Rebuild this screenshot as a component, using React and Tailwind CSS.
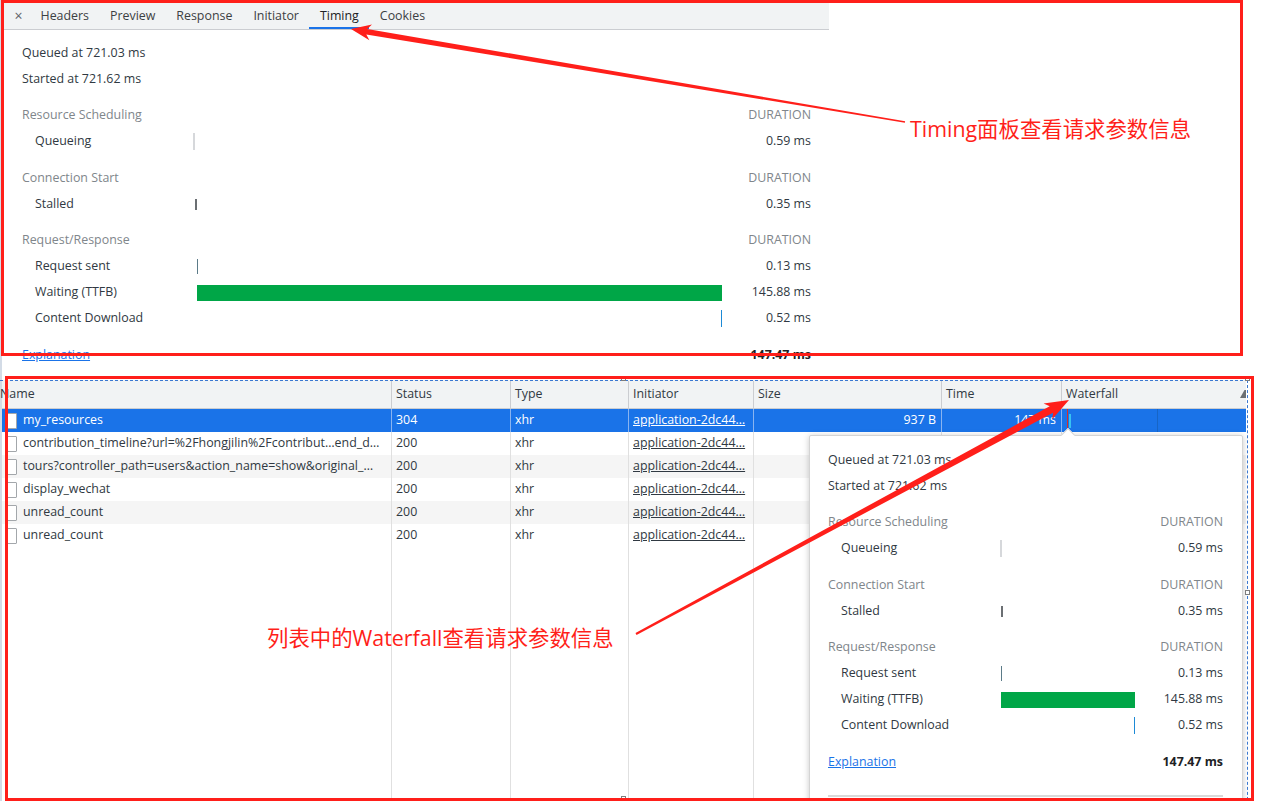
import React from 'react';

const TABS = ['Headers', 'Preview', 'Response', 'Initiator', 'Timing', 'Cookies'];

const SECTIONS = [
  { title: 'Resource Scheduling', rows: [{ label: 'Queueing', value: '0.59 ms', bar: 'queue' }] },
  { title: 'Connection Start', rows: [{ label: 'Stalled', value: '0.35 ms', bar: 'stalled' }] },
  {
    title: 'Request/Response',
    rows: [
      { label: 'Request sent', value: '0.13 ms', bar: 'sent' },
      { label: 'Waiting (TTFB)', value: '145.88 ms', bar: 'wait' },
      { label: 'Content Download', value: '0.52 ms', bar: 'download' },
    ],
  },
];

const COLS = [
  { title: 'Name', w: 'w-[390px]' },
  { title: 'Status', w: 'w-[119px]' },
  { title: 'Type', w: 'w-[118px]' },
  { title: 'Initiator', w: 'w-[125px]' },
  { title: 'Size', w: 'w-[188px]' },
  { title: 'Time', w: 'w-[120px]' },
  { title: 'Waterfall', w: 'w-[184px]' },
];

const REQUESTS = [
  { name: 'my_resources', status: '304', size: '937 B', time: '147 ms', selected: true },
  { name: 'contribution_timeline?url=%2Fhongjilin%2Fcontribut…end_d…', status: '200' },
  { name: 'tours?controller_path=users&action_name=show&original_…', status: '200' },
  { name: 'display_wechat', status: '200' },
  { name: 'unread_count', status: '200' },
  { name: 'unread_count', status: '200' },
];

// tapered annotation arrow, thin at the tail and thick near the head
const arrowPoints = (tail, tip, w0, w1, L, H) => {
  const dx = tip[0] - tail[0];
  const dy = tip[1] - tail[1];
  const len = Math.hypot(dx, dy);
  const ux = dx / len, uy = dy / len;
  const nx = -uy, ny = ux;
  const bx = tip[0] - ux * L, by = tip[1] - uy * L;
  const wx = bx - ux * 4, wy = by - uy * 4;
  const p = (x, y) => `${x.toFixed(1)},${y.toFixed(1)}`;
  return [
    p(tail[0] + nx * w0, tail[1] + ny * w0),
    p(bx + nx * w1, by + ny * w1),
    p(wx + nx * H, wy + ny * H),
    p(tip[0], tip[1]),
    p(wx - nx * H, wy - ny * H),
    p(bx - nx * w1, by - ny * w1),
    p(tail[0] - nx * w0, tail[1] - ny * w0),
  ].join(' ');
};

const Bar = ({ kind }) => {
  if (kind === 'queue') return <div className="h-[17px] w-[2px] bg-[#d6d8db]" />;
  if (kind === 'stalled') return <div className="ml-[0.4%] h-[11px] w-[2px] bg-[#6b6f73]" />;
  if (kind === 'sent') return <div className="ml-[0.8%] h-[15px] w-px bg-[#5b7b88]" />;
  if (kind === 'wait') return <div className="ml-[0.8%] h-[16px] flex-1 bg-[#00a647]" />;
  return <div className="ml-auto h-[17px] w-px bg-[#1d8ad6]" />;
};

const TimingTable = ({ labelW, barW }) => (
  <div className="text-[12.4px] text-[#303942]">
    <div className="flex h-[26px] items-center">Queued at 721.03 ms</div>
    <div className="flex h-[26px] items-center">Started at 721.62 ms</div>
    {SECTIONS.map((s) => (
      <div key={s.title} className="mt-[10.5px]">
        <div className="flex h-[26px] items-center text-[#80868b]">
          <span className="flex-1">{s.title}</span>
          <span>DURATION</span>
        </div>
        {s.rows.map((r) => (
          <div key={r.label} className="flex h-[26px] items-center">
            <div className={`${labelW} shrink-0 pl-[13px]`}>{r.label}</div>
            <div className={`${barW} flex h-full shrink-0 items-center`}>
              <Bar kind={r.bar} />
            </div>
            <div className="flex-1 text-right">{r.value}</div>
          </div>
        ))}
      </div>
    ))}
    <div className="mt-[10.5px] flex h-[26px] items-center">
      <a className="text-[#1a73e8] underline">Explanation</a>
      <span className="ml-auto font-bold text-[#202124]">147.47 ms</span>
    </div>
  </div>
);

const RequestRow = ({ req, striped }) => {
  const sel = req.selected;
  const tone = sel ? 'bg-[#1a73e8] text-white' : striped ? 'bg-[#f5f5f5] text-[#303942]' : 'bg-white text-[#303942]';
  const line = sel ? 'border-[#8ab4f0]' : 'border-[#e0e0e0]';
  return (
    <div className={`flex h-[23px] shrink-0 items-center text-[12.4px] ${tone}`}>
      <div className={`flex h-full w-[390px] shrink-0 items-center overflow-hidden border-r pl-[5px] ${line}`}>
        <span className="mr-[6px] h-[16px] w-[10px] shrink-0 rounded-[1px] border border-[#a3a7ab] bg-white" />
        <span className="whitespace-nowrap">{req.name}</span>
      </div>
      <div className={`flex h-full w-[119px] shrink-0 items-center border-r pl-[4px] ${line}`}>{req.status}</div>
      <div className={`flex h-full w-[118px] shrink-0 items-center border-r pl-[4px] ${line}`}>xhr</div>
      <div className={`flex h-full w-[125px] shrink-0 items-center overflow-hidden border-r pl-[4px] ${line}`}>
        <span className="whitespace-nowrap underline">application-2dc44…</span>
      </div>
      <div className={`flex h-full w-[188px] shrink-0 items-center justify-end border-r pr-[5px] ${line}`}>{req.size}</div>
      <div className={`flex h-full w-[120px] shrink-0 items-center justify-end border-r pr-[5px] ${line}`}>{req.time}</div>
      <div className="flex h-full w-[184px] shrink-0 items-center pl-[5px]">
        {sel && (
          <>
            <span className="h-full w-px bg-[#d93025]" />
            <span className="ml-px h-[14px] w-[2px] bg-[#36c3f2]" />
            <span className="ml-[86px] h-full w-px bg-[#1765c6]" />
          </>
        )}
      </div>
    </div>
  );
};

const NetworkTable = () => (
  <div className="flex w-[1244px] flex-1 flex-col">
    <div className="flex h-[29px] shrink-0 border-b border-[#cbcdd1] bg-[#f1f3f4] pt-px text-[12.4px] text-[#303942]">
      {COLS.map((c, i) => (
        <div
          key={c.title}
          className={`${c.w} flex shrink-0 items-center ${i < COLS.length - 1 ? 'border-r border-[#cbcdd1]' : 'justify-between'} ${i === 0 ? 'pl-0' : 'pl-[4px]'}`}
        >
          <span className={i === 0 ? '-ml-[2px]' : ''}>{c.title}</span>
          {i === COLS.length - 1 && (
            <svg width="6" height="8" viewBox="0 0 6 8" className="mb-[2px]">
              <polygon points="4.5,0 6,0 6,8 0,8" fill="#6b6f73" />
            </svg>
          )}
        </div>
      ))}
    </div>
    {REQUESTS.map((r, i) => (
      <RequestRow key={i} req={r} striped={i % 2 === 0 && i > 0} />
    ))}
    <div className="flex flex-1">
      {COLS.map((c, i) => (
        <div key={c.title} className={`${c.w} shrink-0 ${i < COLS.length - 1 ? 'border-r border-[#e0e0e0]' : ''}`} />
      ))}
    </div>
  </div>
);

const Handle = ({ className }) => (
  <div className={`absolute h-[5px] w-[5px] border border-[#7d7d7d] bg-white ${className}`} />
);

export default function App() {
  return (
    <div className="relative flex h-[801px] w-[1267px] overflow-hidden bg-white font-['Open_Sans','Noto_Sans_CJK_SC',sans-serif]">
      <div className="h-full w-[2px] shrink-0 bg-[#d3dbe6]" />
      <div className="flex min-w-0 flex-1 flex-col">
        <section className="h-[380px] shrink-0">
          <div className="flex h-[30px] w-[827px] items-stretch border-b border-[#cbcdd1] bg-[#f1f3f4] text-[12.4px] text-[#3c4043]">
            <div className="flex w-[28px] items-center justify-center pl-[5px] pt-[2px] text-[14px] text-[#5f6368]">×</div>
            {TABS.map((t) => (
              <div
                key={t}
                className={`flex items-center px-[10.5px] ${t === 'Timing' ? 'border-b-2 border-[#1a73e8] pt-[5px] text-[#202124]' : 'pt-[3px]'}`}
              >
                {t}
              </div>
            ))}
          </div>
          <div className="w-[827px] pl-[20px] pr-[18px] pt-[10px]">
            <TimingTable labelW="w-[171px]" barW="w-[529px]" />
          </div>
        </section>
        <NetworkTable />
      </div>

      {/* waterfall hover popup */}
      <div className="absolute left-[809px] top-[435px] h-[400px] w-[434px] rounded-[2px] border border-[#d4d4d4] bg-white pl-[18px] pr-[19px] pt-[11px] shadow-[0_1px_6px_rgba(0,0,0,0.22)]">
        <div className="absolute -top-[6px] left-[253px] h-[10px] w-[10px] rotate-45 border-l border-t border-[#d4d4d4] bg-white" />
        <TimingTable labelW="w-[172px]" barW="w-[135px]" />
        <div className="mt-[20px] border-t-2 border-[#d9d9d9]" />
      </div>

      {/* selection outline */}
      <div className="pointer-events-none absolute left-0 top-[380px] h-[430px] w-[1248px] border-r border-t border-dashed border-[#3a78d0]" />
      <Handle className="left-[621px] top-[376px]" />
      <Handle className="left-[1245px] top-[376px]" />
      <Handle className="left-[1245px] top-[590px]" />
      <Handle className="left-[621px] top-[796px]" />

      {/* annotations */}
      <div className="pointer-events-none absolute left-[1px] top-0 h-[356px] w-[1242px] border-[3px] border-[#ff1f1a]" />
      <div className="pointer-events-none absolute left-[5px] top-[376px] h-[425px] w-[1249px] border-[3px] border-[#ff1f1a]" />
      <svg className="pointer-events-none absolute left-0 top-0" width="1267" height="801">
        <polygon points={arrowPoints([905, 122], [351, 29], 0.8, 2.8, 16, 8)} fill="#ff1f1a" />
        <polygon points={arrowPoints([636, 634], [1069, 400], 1, 3.6, 20, 9)} fill="#ff1f1a" />
      </svg>
      <div className="pointer-events-none absolute left-[910px] top-[115px] whitespace-nowrap text-[21.4px] leading-[28px] text-[#ff1f1a]">
        Timing面板查看请求参数信息
      </div>
      <div className="pointer-events-none absolute left-[267px] top-[624px] whitespace-nowrap text-[21.4px] leading-[28px] text-[#ff1f1a]">
        列表中的Waterfall查看请求参数信息
      </div>
    </div>
  );
}
